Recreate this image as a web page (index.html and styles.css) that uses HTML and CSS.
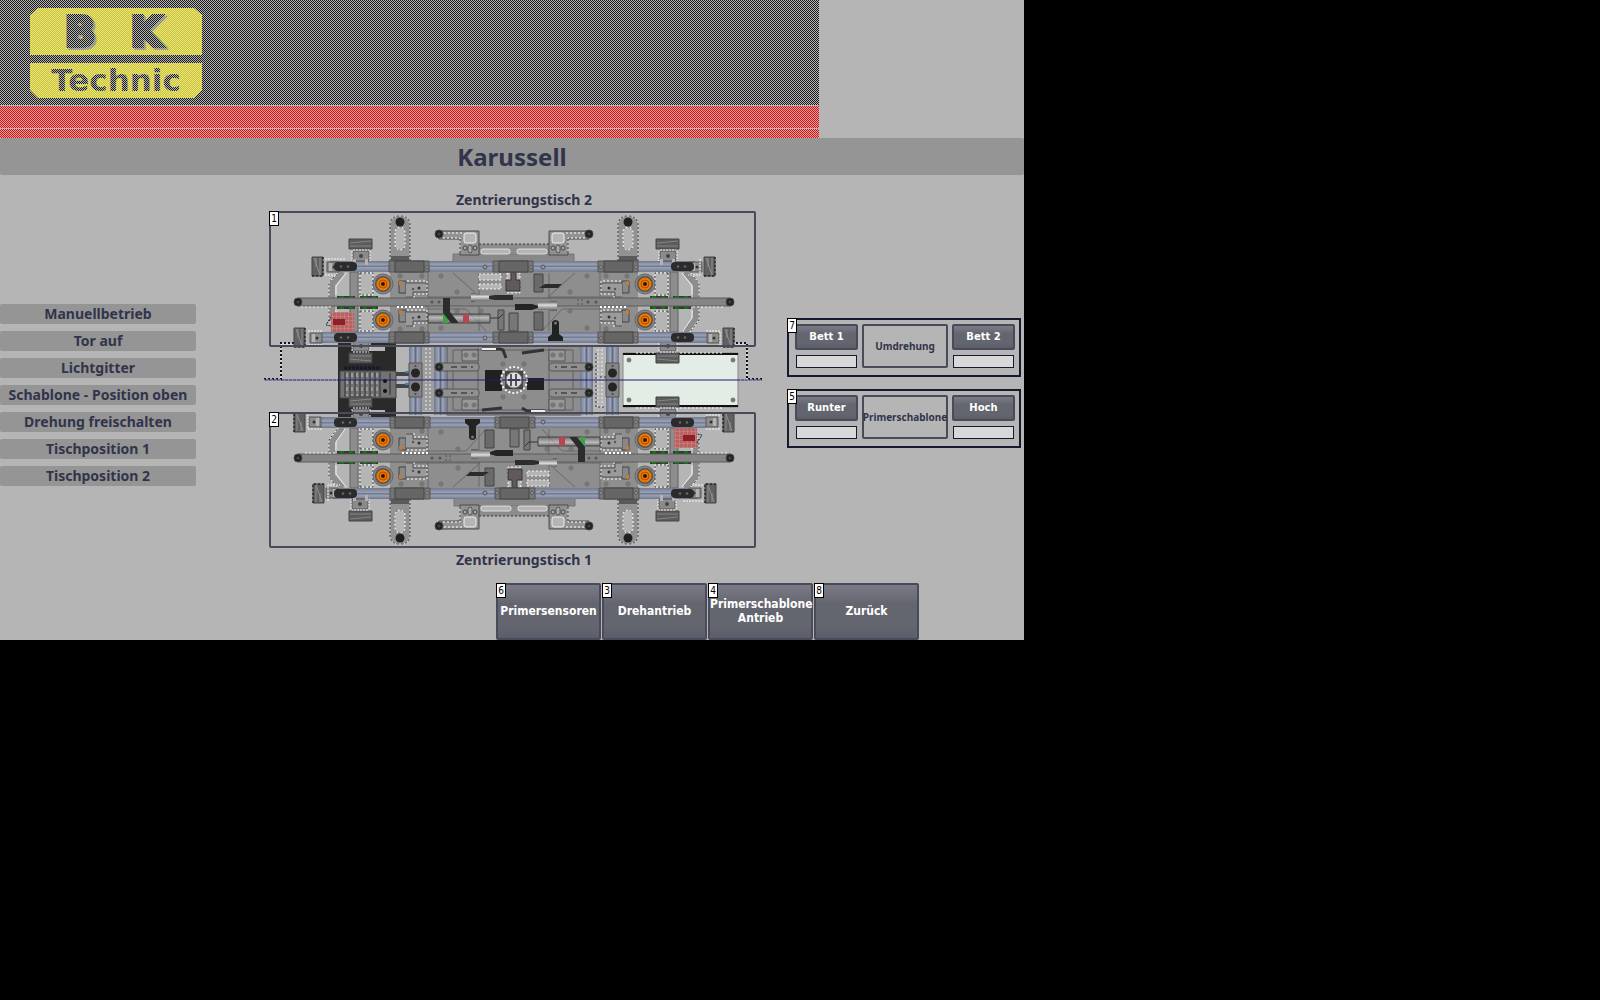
FILE: index.html
```
<!DOCTYPE html>
<html lang="de">
<head>
<meta charset="utf-8">
<title>Karussell</title>
<link rel="stylesheet" href="styles.css">
</head>
<body>
<main class="panel">
  <header class="banner">
    <svg class="logo" viewBox="0 0 172 90" role="img" aria-label="BK Technic">
      <path class="logo-plate" d="M8 0H164L172 7V47H0V7ZM0 55H172V82L164 90H8L0 82Z"/>
      <text class="logo-bk logo-shade" x="52" y="40">B</text>
      <text class="logo-bk logo-shade" x="118" y="40">K</text>
      <text class="logo-bk" x="50" y="38">B</text>
      <text class="logo-bk" x="116" y="38">K</text>
      <text class="logo-technic" x="86" y="83">Technic</text>
    </svg>
    <div class="stripe stripe-wide"></div>
    <div class="stripe stripe-thin"></div>
  </header>
  <h1 class="title">Karussell</h1>

  <div class="content">
    <ul class="states">
      <li>Manuellbetrieb</li>
      <li>Tor auf</li>
      <li>Lichtgitter</li>
      <li>Schablone - Position oben</li>
      <li>Drehung freischalten</li>
      <li>Tischposition 1</li>
      <li>Tischposition 2</li>
    </ul>

    <section class="machine">
      <h2 class="table-name">Zentrierungstisch 2</h2>
      <div class="diagram">
        <svg class="drawing" viewBox="264 210 498 340" aria-hidden="true">
          <defs>
            <linearGradient id="rail" x1="0" y1="0" x2="0" y2="1">
              <stop offset="0" stop-color="#6f7688"/><stop offset=".3" stop-color="#98a1b8"/><stop offset=".5" stop-color="#747c90"/><stop offset=".6" stop-color="#98a1b8"/><stop offset="1" stop-color="#737a8c"/>
            </linearGradient>
            <linearGradient id="vrail">
              <stop offset="0" stop-color="#70788c"/><stop offset=".35" stop-color="#9ba4ba"/><stop offset=".5" stop-color="#626a7d"/><stop offset=".65" stop-color="#9ba4ba"/><stop offset="1" stop-color="#70788c"/>
            </linearGradient>
            <linearGradient id="steel" x1="0" y1="0" x2="0" y2="1">
              <stop offset="0" stop-color="#555"/><stop offset=".4" stop-color="#ddd"/><stop offset="1" stop-color="#555"/>
            </linearGradient>
            <linearGradient id="block" x1="0" y1="0" x2="1" y2="0">
              <stop offset="0" stop-color="#4c4c4c"/><stop offset=".45" stop-color="#7d7d7d"/><stop offset=".5" stop-color="#484848"/><stop offset="1" stop-color="#707070"/>
            </linearGradient>
            <pattern id="mesh" width="4" height="4" patternUnits="userSpaceOnUse">
              <path d="M0 0h4M0 0v4" stroke="#d08a8a" stroke-width="1"/>
            </pattern>
            <g id="bolt"><circle r="2" fill="#aaa" stroke="#555" stroke-width=".8"/><circle r=".8" fill="#333"/></g>
            <g id="knob"><circle r="4" fill="#222" stroke="#444"/><circle r="1.500" fill="#444"/></g>
            <g id="vent"><circle r="10" fill="#858585" stroke="#666"/><circle r="8" fill="#555"/><circle r="6.500" fill="#f07800"/><circle r="4" fill="none" stroke="#a64d00"/><circle r="2" fill="#2a1a0a"/></g>
            <g id="sleeve"><path d="M0 0h40v11H0z" fill="#777" stroke="#555"/><path d="M6 0h29v11H6z" fill="#666" stroke="#444"/><circle cx="3" cy="6" r="1.500" fill="#999" stroke="#444" stroke-width=".6"/><circle cx="38" cy="6" r="1.500" fill="#999" stroke="#444" stroke-width=".6"/></g>
            <g id="handle"><rect width="23" height="9" rx="4" fill="#2b2b2b"/><circle cx="7" cy="4.500" r="1.300" fill="#666"/><circle cx="14" cy="4.500" r="1.300" fill="#666"/></g>
            <g id="endblock"><path d="M0 0h11v19H0z" fill="#606060" stroke="#444"/><path d="M2 1l6 17M4 1v9M8 1v17" stroke="#909090"/><path d="M0 19h11V0" fill="none" stroke="#111" stroke-dasharray="2 2"/></g>
            <g id="joint"><path d="M0 0h12v10H0z" fill="#8c8c8c" stroke="#555"/><path d="M2 1h3v8H2z" fill="#b4b4b4"/><circle cx="7" cy="5" r="1.500" fill="#333"/></g>
            <g id="clamp">
              <path d="M0 0h23v10H0z" fill="#5c5c5c" stroke="#444"/><path d="M1 4l21-2M1 7h21" stroke="#858585"/>
              <path d="M4 12h16v10H4z" fill="#8b8b8b" stroke="#555"/><path d="M4 11h16M3 12v10M21 12v10" fill="none" stroke="#eee" stroke-dasharray="2 1"/><circle cx="12" cy="17" r="2" fill="#444"/>
              <path d="M4 20h3v6H4zM16 20h3v6h-3z" fill="#b8b0b4"/>
            </g>
            <g id="pillar">
              <path d="M0 45V8Q1 0 10 0T20 8V45Z" fill="#929292" stroke="#ccc"/>
              <path d="M0 45V8Q1 0 10 0T20 8V45Z" fill="none" stroke="#333" stroke-dasharray="2 2"/>
              <rect x="5" y="11" width="10" height="23" rx="5" fill="#b5b5b5" stroke="#fff"/>
              <rect x="5" y="11" width="10" height="23" rx="5" fill="none" stroke="#555" stroke-dasharray="2 2"/>
              <path d="M1 40h18v5H1z" fill="#5a5a5a"/><circle cx="10" cy="6" r="4.500" fill="#202020"/>
            </g>
            <g id="arm">
              <path d="M0 0h40v24H21V8H0Z" fill="#929292" stroke="#4a4a4a"/>
              <path d="M4 7h17v15M5 2h20" fill="none" stroke="#fff" stroke-dasharray="2 2"/>
              <rect x="25" y="2" width="12" height="10" rx="2" fill="#b5b5b5" stroke="#eee"/>
              <circle cx="26" cy="17" r="2" fill="#aaa" stroke="#444"/><circle cx="36" cy="17" r="2" fill="#aaa" stroke="#444"/><rect x="29" y="14" width="4" height="8" rx="2" fill="#aaa" stroke="#555"/>
              <use href="#knob" y="3"/>
            </g>
            <g id="gripper">
              <path d="M0 2h7v12H0z" fill="#888" stroke="#444"/><path d="M0 2h3v4H0z" fill="#c77a32"/>
              <path d="M7 4h21v9H14v5H7" fill="#9b9b9b" stroke="#555"/><path d="M8 2h20v13H15v4" fill="none" stroke="#fff" stroke-dasharray="2 2"/>
              <circle cx="20" cy="9" r="1.500" fill="#333"/><circle cx="14" cy="10" r="1.200" fill="#555"/>
            </g>
            <g id="side">
              <path d="M343 272l-11 12v34l11 14" fill="none" stroke="#8d8d8d" stroke-width="6"/>
              <path d="M339 271l-10 12v37l9 12M346 273l-10 13v9M336 310v8l9 13M360 273h13v22h-13zM360 311h13v20h-13z" fill="none" stroke="#f4f4f4"/>
              <path d="M339 271l-10 12v37l9 12M360 273h13v22h-13zM360 311h13v20h-13z" fill="none" stroke="#333" stroke-dasharray="2 2"/>
              <path d="M350 272h8v60h-8z" fill="#8d8d8d" stroke="#636363"/>
              <path d="M337 296h18v13h-18zM360 296h18v13h-18z" fill="#343a34"/>
              <path d="M340 297h4M349 297h4M363 297h4M372 297h4M340 308h4M349 308h4M363 308h4M372 308h4" stroke="#087808" stroke-width="2"/>
            </g>
            <g id="tisch">
              <path d="M453 254h121v8H453z" fill="#888" stroke="#777"/>
              <path d="M479 244h70v10h-70z" fill="#8c8c8c"/><path d="M479 244h70" stroke="#333" stroke-dasharray="2 2"/>
              <rect x="481" y="249" width="29" height="5" rx="2" fill="#b5b5b5" stroke="#ddd"/><rect x="517" y="249" width="30" height="5" rx="2" fill="#b5b5b5" stroke="#ddd"/>
              <use href="#pillar" x="390" y="216"/><use href="#pillar" x="618" y="216"/>
              <use href="#arm" transform="translate(439 231)"/><use href="#arm" transform="translate(589 231) scale(-1 1)"/>
              <use href="#side"/><use href="#side" transform="translate(1028 0) scale(-1 1)"/>
              <path d="M390 272h248v60H390z" fill="#8e8e8e"/>
              <path d="M453 273l27 24h-52M575 273l-27 24h66M428 309h38l20 22M600 309h-38l-20 22M479 273v58M549 273v58M428 273v58M600 273v58" fill="none" stroke="#686868"/>
              <path d="M479 274h22v6h-22zM479 284h22v5h-22zM507 273h13v20h-13z" fill="#b5b5b5" stroke="#f2f2f2" stroke-dasharray="2 2"/>
              <path d="M511 272h5v8h4v11h-14v-11h5z" fill="#62595e" stroke="#333"/><path d="M509 313h9v18h-9zM498 310h6v20h-6z" fill="#777" stroke="#444"/>
              <path d="M534 274h9v18h-9z" fill="#6a6a6a" stroke="#444"/><path d="M534 312h9v18h-9z" fill="#6a6a6a" stroke="#444"/>
              <use href="#gripper" x="399" y="279"/><use href="#gripper" x="399" y="308"/>
              <use href="#gripper" transform="translate(629 279) scale(-1 1)"/><use href="#gripper" transform="translate(629 308) scale(-1 1)"/>
              <use href="#bolt" x="441" y="276"/><use href="#bolt" x="457" y="292"/><use href="#bolt" x="422" y="276"/><use href="#bolt" x="422" y="329"/><use href="#bolt" x="457" y="311"/><use href="#bolt" x="481" y="311"/><use href="#bolt" x="441" y="328"/>
              <use href="#bolt" x="587" y="276"/><use href="#bolt" x="570" y="292"/><use href="#bolt" x="570" y="311"/><use href="#bolt" x="587" y="328"/><use href="#bolt" x="606" y="276"/><use href="#bolt" x="627" y="276"/><use href="#bolt" x="606" y="329"/><use href="#bolt" x="400" y="276"/><use href="#bolt" x="400" y="329"/>
              <path d="M298 298h432v8H298z" fill="#858585" stroke="#5d5d5d"/>
              <path d="M301 307h32M693 307h32" stroke="#eee" stroke-dasharray="2 2"/>
              <path d="M397 307h28M600 307h28" stroke="#fff" stroke-width="2" stroke-dasharray="2 2"/>
              <circle cx="432" cy="302" r="1.500" fill="#555"/><circle cx="439" cy="302" r="1.500" fill="#555"/><circle cx="588" cy="302" r="1.500" fill="#555"/><circle cx="596" cy="302" r="1.500" fill="#555"/>
              <path d="M578 299v6M582 299v6" stroke="#555" stroke-dasharray="2 2"/>
              <use href="#knob" x="298" y="302"/><use href="#knob" x="730" y="302"/>
              <use href="#vent" x="383" y="284"/><use href="#vent" x="383" y="320"/><use href="#vent" x="645" y="284"/><use href="#vent" x="645" y="320"/>
              <path d="M331 312h23v20h-23z" fill="#b86363"/><path d="M331 312h23v20h-23z" fill="url(#mesh)"/><path d="M333 319h12v6h-12z" fill="#8e1f25"/><path d="M331 317l-5 8 5 1" fill="none" stroke="#222" stroke-dasharray="2 1"/>
              <path d="M428 314h62v9h-62z" fill="url(#steel)" opacity=".55"/><path d="M428 314h62v9h-62z" fill="none" stroke="#444"/><path d="M490 318h9l4-4" fill="none" stroke="#333"/>
              <path d="M443 314h5v9h-5z" fill="#3ca34b"/><path d="M463 314h6v9h-6z" fill="#b54650"/>
              <path d="M443 298h7v14l8 10v1h-7l-8-10z" fill="#2c2c2c"/>
              <path d="M471 293h4v9h-4zM475 295h14v6h-14z" fill="url(#steel)"/><path d="M489 296l6-1h18v5h-18l-6-1z" fill="#2d2d2d"/>
              <path d="M515 304h17l6 2v2l-6 2h-17z" fill="#242424"/><path d="M538 303h12v7h-12zM550 301h7v10h-7z" fill="url(#steel)"/>
              <path d="M539 288l6-4h17l-4 4z" fill="#2b2b2b"/>
              <path d="M330 261h365v11H330z" fill="url(#rail)"/><path d="M322 332h386v11H322z" fill="url(#rail)"/>
              <use href="#joint" x="327" y="262"/><use href="#joint" x="690" y="262"/><use href="#joint" x="310" y="333"/><use href="#joint" x="707" y="333"/>
              <path d="M325 259h20M325 275h12M700 259v16h-12M308 331h14M308 345h14M706 331h14v14" fill="none" stroke="#f6f6f6" stroke-dasharray="2 1"/>
              <use href="#endblock" x="312" y="257"/><use href="#endblock" x="704" y="257"/><use href="#endblock" x="294" y="328"/><use href="#endblock" x="723" y="328"/>
              <use href="#clamp" x="349" y="239"/><use href="#clamp" x="656" y="239"/>
              <use href="#handle" x="334" y="262"/><use href="#handle" x="671" y="262"/><use href="#handle" x="334" y="333"/><use href="#handle" x="671" y="333"/>
              <use href="#sleeve" x="389" y="261"/><use href="#sleeve" x="493" y="261"/><use href="#sleeve" x="598" y="261"/><use href="#sleeve" x="389" y="332"/><use href="#sleeve" x="493" y="332"/><use href="#sleeve" x="598" y="332"/>
              <circle cx="485" cy="267" r="2" fill="#999" stroke="#555"/><circle cx="543" cy="267" r="2" fill="#999" stroke="#555"/><circle cx="485" cy="338" r="2" fill="#999" stroke="#555"/>
              <path d="M552 322a4 4 0 0 1 7 0v12l4 3v4h-15v-4l4-3z" fill="#222"/><circle cx="555.500" cy="323" r="1.500" fill="#777"/>
            </g>
            <g id="link"><rect x="-3" y="-4" width="43" height="8" rx="3" fill="#909090" stroke="#555"/><path d="M12 0h22" stroke="#555" stroke-width="2" stroke-dasharray="6 4"/><use href="#knob"/></g>
            <g id="bearing"><path d="M0 0h13v34H0z" fill="#858585" stroke="#555"/><circle cx="6.500" cy="10" r="4.500" fill="#252525"/><circle cx="6.500" cy="24" r="4.500" fill="#252525"/><circle cx="6.500" cy="3" r="1" fill="#444"/><circle cx="6.500" cy="31" r="1" fill="#444"/></g>
          </defs>

          <path d="M264 380h17v-36h20M762 380h-15v-36h-20" fill="none" stroke="#f5f5f5"/>
          <path d="M264 379h17v-36h20M762 379h-15v-36h-20" fill="none" stroke="#111" stroke-width="2" stroke-dasharray="2 2"/>
          <path d="M338 343h58v74h-58z" fill="#2a2a2a"/><path d="M352 347h33v4h-33zM352 410h33v4h-33z" fill="#b5b5b5"/>
          <path d="M447 346h134v69H447z" fill="#8d8d8d" stroke="#555"/>
          <path d="M422 347h12v64h-12z" fill="#9d9d9d"/>
          <path d="M426 348v64M430 348v64M598 349v60M602 349v60" stroke="#eee" stroke-dasharray="2 2"/>
          <path d="M409 345h13v70h-13z" fill="url(#vrail)"/><path d="M434 345h13v70h-13z" fill="url(#vrail)"/><path d="M580 345h13v70h-13z" fill="url(#vrail)"/><path d="M606 345h13v70h-13z" fill="url(#vrail)"/>
          <path d="M453 350h120v60H453zM478 348v64M549 348v64" fill="none" stroke="#606060"/>
          <path d="M482 349h18l3 1 3 8M545 411h-18l-5-3M482 410l20-2M544 350l-22 3" fill="none" stroke="#333" stroke-width="3"/>
          <path d="M482 349h14M531 411h14" stroke="#eee" stroke-width="2"/>
          <path d="M396 372h13v4h-13zM396 384h13v4h-13z" fill="#444"/><path d="M405 372h4M405 384h4" stroke="#258abf" stroke-width="2"/>
          <path d="M340 371h56v27h-56z" fill="#737373" stroke="#444"/>
          <path d="M344 368h37" stroke="#111b2b" stroke-width="3" stroke-dasharray="3 1"/>
          <path d="M345 372v25M350 372v25M355 372v25M360 372v25M365 372v25M370 372v25M375 372v25M380 372v25" stroke="#333"/>
          <path d="M347 373v23M352 373v23M357 373v23M362 373v23M367 373v23M372 373v23M377 373v23" stroke="#999" stroke-width="2" stroke-dasharray="4 3"/>
          <circle cx="385" cy="381" r="2" fill="#111"/><circle cx="385" cy="391" r="2" fill="#111"/><path d="M390 373v22" stroke="#333"/>
          <use href="#bearing" x="409" y="363"/><use href="#bearing" x="606" y="363"/>
          <use href="#link" x="439" y="367"/><use href="#link" x="439" y="393"/>
          <use href="#link" transform="translate(589 367) scale(-1 1)"/><use href="#link" transform="translate(589 393) scale(-1 1)"/>
          <g fill="#999" stroke="#555"><path d="M462 350h16v11h-16zM462 399h16v11h-16zM549 350h16v11h-16zM549 399h16v11h-16z"/></g>
          <use href="#bolt" x="466" y="355"/><use href="#bolt" x="474" y="355"/><use href="#bolt" x="466" y="405"/><use href="#bolt" x="474" y="405"/><use href="#bolt" x="553" y="355"/><use href="#bolt" x="561" y="355"/><use href="#bolt" x="553" y="405"/><use href="#bolt" x="561" y="405"/>
          <use href="#bolt" x="503" y="364"/><use href="#bolt" x="524" y="364"/><use href="#bolt" x="503" y="397"/><use href="#bolt" x="524" y="397"/>
          <path d="M485 370h17v21h-17zM527 378h17v12h-17z" fill="#202020"/>
          <circle cx="514" cy="380" r="13" fill="#858585" stroke="#f5f5f5" stroke-width="2" stroke-dasharray="2 2"/>
          <path d="M505 371h18v18h-18z" fill="#444"/><circle cx="514" cy="380" r="8" fill="#ddd" stroke="#777"/><path d="M511 374v12M516 374v12M508 380h12" stroke="#555" stroke-width="2"/>
          <path d="M623 353h115v54H623z" fill="#e4ece6" stroke="#888"/><path d="M623 354h115M623 406h115" stroke="#111" stroke-width="2"/><path d="M636 353h88M636 408h88" stroke="#fff" stroke-dasharray="2 2"/>
          <path d="M596 353v54h10M600 377h6" fill="none" stroke="#333" stroke-dasharray="2 2"/>
          <use href="#bolt" x="629" y="360"/><use href="#bolt" x="733" y="360"/><use href="#bolt" x="629" y="400"/><use href="#bolt" x="733" y="400"/>
          <use href="#clamp" transform="translate(349 363) scale(1 -1)"/><use href="#clamp" x="349" y="397"/>
          <use href="#clamp" transform="translate(656 363) scale(1 -1)"/><use href="#clamp" x="656" y="397"/>
          <use href="#tisch"/>
          <use href="#tisch" transform="rotate(180 514 380)"/>
          <path d="M264 380h498" stroke="#1c1c78"/><path d="M264 380h74M740 380h22" stroke="#b5b5d8" stroke-dasharray="1 3"/>
        </svg>
        <div class="frames">
          <button class="frame" type="button" aria-label="Zentrierungstisch 2"><span class="key">1</span></button>
          <button class="frame" type="button" aria-label="Zentrierungstisch 1"><span class="key">2</span></button>
        </div>
      </div>
      <h2 class="table-name">Zentrierungstisch 1</h2>
    </section>

    <section class="controls">
      <div class="group">
        <span class="key">7</span>
        <button class="command" type="button">Bett 1</button>
        <p class="group-name">Umdrehung</p>
        <button class="command" type="button">Bett 2</button>
        <output class="lamp"></output>
        <output class="lamp"></output>
      </div>
      <div class="group">
        <span class="key">5</span>
        <button class="command" type="button">Runter</button>
        <p class="group-name">Primerschablone</p>
        <button class="command" type="button">Hoch</button>
        <output class="lamp"></output>
        <output class="lamp"></output>
      </div>
    </section>
  </div>

  <nav class="menu">
    <button class="menu-button" type="button"><span class="key">6</span>Primersensoren</button>
    <button class="menu-button" type="button"><span class="key">3</span>Drehantrieb</button>
    <button class="menu-button" type="button"><span class="key">4</span>Primerschablone Antrieb</button>
    <button class="menu-button" type="button"><span class="key">8</span>Zurück</button>
  </nav>
</main>
</body>
</html>
```
FILE: styles.css
```
* { box-sizing: border-box; }

body {
  margin: 0;
  background: #000;
  color: #31344a;
  font-family: "Noto Sans", "DejaVu Sans Condensed", sans-serif;
  font-size: 14px;
  font-weight: bold;
}

h1, h2, p, ul { margin: 0; padding: 0; font-size: inherit; }
button { font: inherit; padding: 0; }

.panel {
  width: 64%;
  min-width: 960px;
  background: #b5b5b5;
}

/* Banner: solid colours under a one-pixel raster */
.banner {
  position: relative;
  width: 80%;
  padding-top: 8px;
  background: #1a1a1a;
}
.banner::after {
  content: "";
  position: absolute;
  inset: 0;
  background: repeating-conic-gradient(#b5b5b5 0 25%, transparent 0 50%) 0 0 / 2px 2px;
}
.logo { display: block; width: 172px; height: 90px; margin: 0 0 7px 30px; }
.logo-plate { fill: #fff200; }
.logo-bk {
  fill: #1a1a1a;
  stroke: #1a1a1a;
  stroke-width: 4px;
  font: bold 40px "DejaVu Sans", sans-serif;
  text-anchor: middle;
}
.logo-shade { fill: #8a8770; stroke: #8a8770; }
.logo-technic { fill: #1a1a1a; font: bold 31px "DejaVu Sans", sans-serif; text-anchor: middle; }
.stripe { background: #f00; border-top: 1px solid #b5b5b5; }
.stripe-wide { height: 23px; }
.stripe-thin { height: 10px; }

.title {
  background: #959595;
  border-radius: 2px;
  font-size: 24px;
  line-height: 37px;
  text-align: center;
}

.content {
  display: grid;
  grid-template-columns: 264px minmax(0, 1fr) 262px;
}

.states {
  display: grid;
  align-content: start;
  gap: 7px;
  width: 196px;
  padding-top: 129px;
  list-style: none;
}
.states li {
  background: #959595;
  border-radius: 2px;
  line-height: 20px;
  text-align: center;
  white-space: nowrap;
}

.machine { padding: 15px 0 13px; }
.table-name { padding-left: 22px; line-height: 20px; text-align: center; }
.diagram { position: relative; }
.drawing { display: block; width: 100%; }
.frames {
  position: absolute;
  inset: 0;
  display: flex;
  flex-direction: column;
  justify-content: space-between;
  padding: 1px 6px 2px 5px;
}
.frame {
  position: relative;
  height: 40.5%;
  background: none;
  border: 2px solid #494b5a;
  border-radius: 2px;
}

/* Function key number in a control's corner */
.key {
  position: absolute;
  top: -2px;
  left: -2px;
  width: 10px;
  border: 1px solid #000;
  background: #fff;
  color: #000;
  font-family: "DejaVu Sans Condensed", sans-serif;
  font-size: 10px;
  font-weight: normal;
  line-height: 13px;
  text-align: center;
}

.controls {
  display: grid;
  align-content: start;
  gap: 12px;
  padding: 143px 3px 0 25px;
}
.group {
  position: relative;
  display: grid;
  grid-template-columns: 63px minmax(0, 1fr) 63px;
  grid-template-rows: 26px 13px;
  gap: 5px 4px;
  padding: 4px 4px 7px 6px;
  border: 2px solid #151a30;
}
.group-name {
  grid-area: 1 / 2 / 3 / 3;
  display: flex;
  align-items: center;
  justify-content: center;
  border: 2px solid #494b5a;
  border-radius: 2px;
  font-size: 10px;
}
.command, .menu-button {
  border: 2px solid #494b5a;
  border-radius: 2px;
  background: linear-gradient(#7b7b87, #64666f 35%, #64666f 75%, #5b5d69);
  color: #fff;
}
.command { padding-bottom: 2px; font-family: "DejaVu Sans", sans-serif; font-size: 10px; }
.lamp { margin: 0 1px; border: 1px solid #151a30; background: #d8d8d8; }
.lamp:last-child { grid-column: 3; }

.menu {
  display: flex;
  justify-content: flex-end;
  gap: 1px;
  padding-right: 105px;
}
.menu-button {
  position: relative;
  width: 105px;
  height: 57px;
  padding-bottom: 2px;
  font-family: "DejaVu Sans Condensed", sans-serif;
  font-size: 12px;
  line-height: 14px;
}
```
